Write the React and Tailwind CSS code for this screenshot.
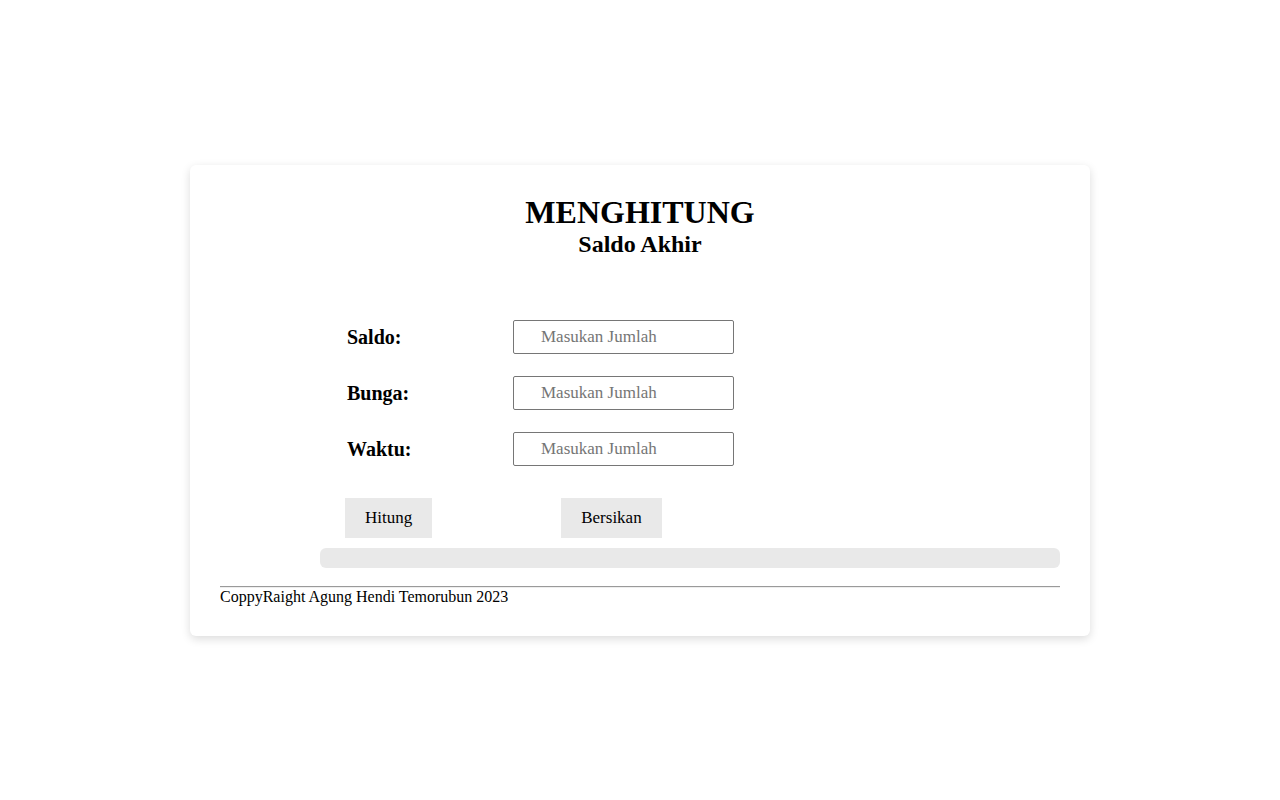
export default function App() {
  const rows = ["Saldo:", "Bunga:", "Waktu:"];
  return (
    <div className="min-h-screen w-full bg-white flex items-center justify-center font-['Liberation_Serif',serif] text-black">
      <div className="w-[900px] bg-white rounded-[6px] shadow-[0_3px_10px_rgba(0,0,0,0.14)] pt-[29px] pb-[30px] px-[30px] flex flex-col">
        <div className="flex flex-col items-center">
          <h1 className="text-[32px] leading-[36px] font-bold">MENGHITUNG</h1>
          <h2 className="text-[24px] leading-[28px] font-bold">Saldo Akhir</h2>
        </div>
        <div className="mt-[62px] flex flex-col gap-[22px] pl-[127px]">
          {rows.map((r) => (
            <div key={r} className="flex items-center">
              <label className="w-[166px] mt-[2px] text-[20px] leading-[23px] font-bold">{r}</label>
              <input
                type="text"
                placeholder="Masukan Jumlah"
                className="w-[221px] h-[34px] border border-[#767676] rounded-[2px] pl-[27px] text-[17px] placeholder:text-[#757575] outline-none"
              />
            </div>
          ))}
        </div>
        <div className="mt-[32px] flex pl-[125px]">
          <button className="h-[40px] px-[20px] bg-[#e9e9e9] text-[17px]">Hitung</button>
          <button className="ml-[129px] h-[40px] px-[20px] bg-[#e9e9e9] text-[17px]">Bersikan</button>
        </div>
        <div className="mt-[10px] ml-[100px] h-[20px] rounded-[6px] bg-[#e9e9e9]"></div>
        <div className="mt-[18px] border-t border-[#9a9a9a] border-b border-b-[#eeeeee]"></div>
        <p className="text-[16px] leading-[18px]">CoppyRaight Agung Hendi Temorubun 2023</p>
      </div>
    </div>
  );
}
